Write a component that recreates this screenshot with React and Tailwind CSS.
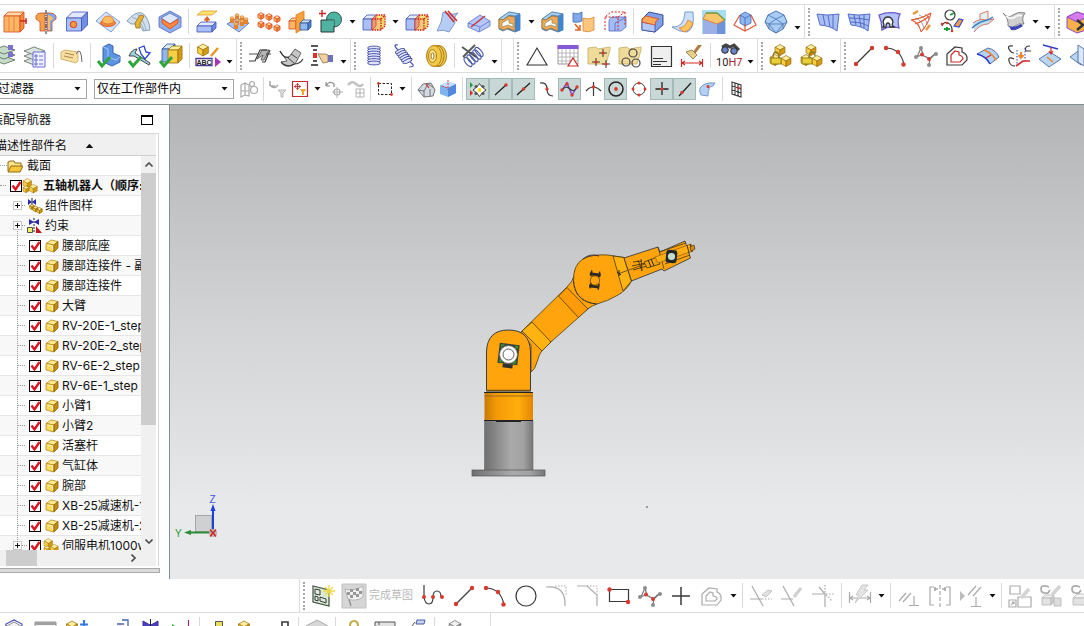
import { useState } from "react";
import clsx from "clsx";

const palettes = {
  blue: ["#dfe9ff", "#a9c0f8", "#6f8fe6", "#4150b4"],
  steel: ["#d5e8fb", "#8fb8ee", "#4a80cf", "#2b4f94"],
  gold: ["#fff0a0", "#f6cf45", "#d39a16", "#9a6c08"],
  orange: ["#ffd9a0", "#fdb664", "#f08a3c", "#d8481e"],
  gray: ["#f1f1f1", "#d3d3d3", "#a9a9a9", "#666"],
  pale: ["#f4f4f4", "#e2e2e2", "#cfcfcf", "#b5b5b5"],
};

// oblique box: front face at x,y with depth d
function Box({ x, y, w, h, d = 5, c = "blue" }) {
  const [top, front, side, line] = palettes[c];
  return (
    <g stroke={line} strokeWidth="0.8" strokeLinejoin="round">
      <path d={`M${x} ${y}l${d} ${-d}h${w}l${-d} ${d}z`} fill={top} />
      <path d={`M${x} ${y}h${w}v${h}h${-w}z`} fill={front} />
      <path d={`M${x + w} ${y}l${d} ${-d}v${h}l${-d} ${d}z`} fill={side} />
    </g>
  );
}

// isometric cube centred on x,y
function Cube({ x, y, s, c = "gold" }) {
  const [top, left, right, line] = palettes[c];
  const k = s * 0.9;
  const q = s / 2;
  return (
    <g stroke={line} strokeWidth="0.7" strokeLinejoin="round">
      <path d={`M${x} ${y - s}l${k} ${q}l${-k} ${q}l${-k} ${-q}z`} fill={top} />
      <path d={`M${x - k} ${y - q}l${k} ${q}v${s}l${-k} ${-q}z`} fill={left} />
      <path d={`M${x} ${y}l${k} ${-q}v${s}l${-k} ${q}z`} fill={right} />
    </g>
  );
}

function Dots({ points, r = 2, fill = "#d93a30" }) {
  return points.map(([x, y]) => <circle key={`${x}-${y}`} cx={x} cy={y} r={r} fill={fill} />);
}

const ink = { fill: "none", stroke: "#3a3a3a", strokeWidth: 1.2 };
const faint = { fill: "none", stroke: "#ababab", strokeWidth: 1.2 };
const red = { fill: "none", stroke: "#cf2a2a", strokeWidth: 1.2 };
const blueLine = { fill: "none", stroke: "#4a4fc0", strokeWidth: 1.2 };

const greenCheck = <path d="M1 17l4 5 8-9" fill="none" stroke="#2fa63c" strokeWidth="3" />;

const studio = (
  <>
    <path d="M3 13L7 4l2 7M15 21l1-7 6-5" {...faint} stroke="#777" />
    <path d="M2 13l6-2 8 4 6-6" fill="none" stroke="#777" strokeWidth="1.300" />
    <Dots points={[[7, 4], [2, 13], [15, 21], [22, 10]]} r={2} fill="#8d8d8d" />
    <Dots points={[[8, 10.5], [15, 15]]} r={2} />
  </>
);

const arcDots = (
  <>
    <path d="M2 4q16 0 19 17" {...ink} />
    <Dots points={[[3, 4], [15, 8], [20.5, 20.5]]} r={2.2} />
  </>
);

const lineDots = (
  <>
    <path d="M4 20L20 4" {...ink} />
    <Dots points={[[4, 20], [20, 4]]} r={2.2} />
  </>
);

const trimBox = (
  <>
    <Box x={1} y={9} w={9} h={11} d={4} />
    <path d="M10 9h9v11h-9z" fill="#f0c878" />
    <path d="M10 9l4-4h9l-4 4z" fill="#f9e47c" />
    <path d="M19 9l4-4v11l-4 4z" fill="#f4d968" />
    <path d="M10 9l4-4v11l-4 4z" fill="#e99a78" stroke="#d3443a" strokeWidth="0.800" />
    <path d="M10 9h9v11h-9M14 5h9v11l-4 4M19 9l4-4" fill="none" stroke="#d3221c" strokeWidth="1.300" strokeDasharray="1.500 1" />
  </>
);

const bracket = (
  <>
    <path d="M1 9L11 2l11 2v16l-5 2-8-3-4 2-4-2z" fill="#5fa0e2" stroke="#4a6f9e" strokeWidth="0.800" />
    <path d="M1 9L11 2l11 2-5 2-6-1-6 5z" fill="#a6d2f2" stroke="#4a6f9e" strokeWidth="0.600" />
    <path d="M1 9l4 1 6-4 6 1v14l-7-3-4 2-5-2z" fill="#f1a955" stroke="#a8732c" strokeWidth="0.800" />
    <path d="M4 13l7-4v4l4 1v3l-5-2-6 2z" fill="#fff" stroke="#8a8a6a" strokeWidth="0.700" />
    <path d="M17 6l5-2v16l-5 2z" fill="#3f86d0" />
  </>
);

const folder = <path d="M1 4l8-1 2 2 12-2v3l-4 14H1z" fill="#f0dc9a" stroke="#c4ab5e" strokeWidth="0.800" />;

const assembly = (
  <>
    <Cube x={11} y={6} s={5.5} />
    <Cube x={6} y={16} s={5.5} />
    <Cube x={17} y={17} s={5.5} />
  </>
);

const icons = {
  Extrude: (
    <>
      <Box x={1} y={6} w={16} h={16} d={4} c="orange" />
      <path d="M6 6v16M11 6v16" stroke="#ea8040" />
      <path d="M17 11h7M23 8v6" stroke="#d3221c" strokeWidth="1.400" />
    </>
  ),
  Revolve: (
    <>
      <path d="M11 3H6Q1 4 2 9l4 3v9h5z" fill="#f5a14a" stroke="#c9502a" strokeWidth="0.800" />
      <path d="M13 3h4q6 1 5 6l-4 3v9h-5z" fill="#7fa6ee" stroke="#c9502a" strokeWidth="0.800" />
      <path d="M14 5q5 1 5 4l-3 2v9h-2z" fill="#f8bd68" />
      <path d="M12 0v24" stroke="#222" strokeDasharray="4 1 1 1" />
    </>
  ),
  Hole: (
    <>
      <Box x={1.5} y={8} w={15} h={13} d={6} />
      <circle cx="8.500" cy="14.500" r="3.200" fill="#f59a3a" stroke="#d8381e" />
    </>
  ),
  Emboss: (
    <>
      <path d="M0 11L10 2l14 10-9 10z" fill="#d3e4fb" stroke="#7f9fd8" />
      <ellipse cx="12" cy="13" rx="7.500" ry="3.500" fill="#f08a3c" stroke="#d8481e" strokeWidth="0.800" />
      <path d="M6 12q1-6 6-6t6 6q-6 4-12 0z" fill="#fcbc5e" stroke="#e0702a" strokeWidth="0.800" />
    </>
  ),
  Rib: (
    <>
      <path d="M0 11Q8 1 15 3q7 4 8 17l-7 1Q13 13 4 14z" fill="#cfe0f0" stroke="#73899c" strokeWidth="0.800" />
      <path d="M5 7q9 3 12 13M10 4q7 6 9 16" stroke="#8fa5b8" fill="none" strokeWidth="0.800" />
      <path d="M8 13l5-8 4 1-4 8v4H9z" fill="#e7b431" stroke="#98701a" strokeWidth="0.800" />
    </>
  ),
  Pocket: (
    <>
      <path d="M12 1l11 6v10l-11 6L1 17V7z" fill="#8fb0f0" stroke="#5067bd" strokeWidth="0.800" />
      <path d="M12 3l9 5-9 6-9-6z" fill="#dbe7ff" stroke="#5067bd" strokeWidth="0.800" />
      <path d="M4 9l8 5 8-5v4l-8 6-8-6z" fill="#f88a3e" stroke="#d94d20" strokeWidth="0.800" />
    </>
  ),
  "Offset Face": (
    <>
      <path d="M2 5l5-4h15l-5 4z" fill="#fbe36b" stroke="#d79a36" strokeWidth="0.800" />
      <path d="M12 15V8M9.500 10.500L12 7.500l2.500 3" stroke="#e0641e" strokeWidth="1.800" fill="none" />
      <Box x={2} y={16} w={15} h={6} d={4} />
    </>
  ),
  "Pattern Feature": (
    <>
      <path d="M1 14l10-6 12 5-10 9z" fill="#a9c4f2" stroke="#4c69b6" strokeWidth="0.800" />
      {[[6, 11], [11, 8], [16, 10], [11, 13], [16, 14], [10, 17], [20, 12]].map(([x, y]) => (
        <g key={`${x}-${y}`}>
          <path d={`M${x - 2} ${y - 3}h4v5h-4z`} fill="#e4832e" />
          <ellipse cx={x} cy={y - 3} rx="2" ry="1.300" fill="#fdc277" stroke="#c86a1e" strokeWidth="0.500" />
        </g>
      ))}
    </>
  ),
  "Pattern Geometry": (
    <>
      {[[4, 6], [12, 7], [20, 9], [4, 14.5], [12, 16], [20, 18]].map(([x, y]) => (
        <Cube key={`${x}-${y}`} x={x} y={y} s={3.4} c="orange" />
      ))}
    </>
  ),
  "Mirror Feature": (
    <>
      <Box x={1} y={11} w={7} h={8} d={3} c="orange" />
      <path d="M8 5l8-4v17l-8 5z" fill="#f7a23c" stroke="#d9781c" strokeWidth="0.800" />
      <Box x={12} y={13} w={8} h={7} d={3} c="steel" />
    </>
  ),
  Unite: (
    <>
      <circle cx="15" cy="9.500" r="7.500" fill="#4fb3a2" stroke="#2d5a53" />
      <path d="M2 10h13v12H2z" fill="#4fb3a2" stroke="#333" />
      <path d="M8.500 10.500H15v5.500Q9 14 8.500 10.500z" fill="#4fb3a2" />
      <path d="M3 0v7M0 3.500h7" stroke="#d3221c" strokeWidth="1.400" />
    </>
  ),
  "Trim Body": trimBox,
  "Split Body": trimBox,
  "Trim Sheet": (
    <>
      <path d="M7 2q6 4 15 1-5 4-3 10l-6 9q-5-3-12-1 5-8 6-19z" fill="#b5ccf4" stroke="#6984c5" strokeWidth="0.800" />
      <path d="M9 1l9 11M12 1l9 10" {...red} strokeWidth="1.500" />
    </>
  ),
  "Divide Face": (
    <>
      <path d="M1 13L13 5l10 6v5l-11 6-11-5z" fill="#b3c8f8" stroke="#6073c9" strokeWidth="0.800" />
      <path d="M1 13l12 4 10-6M13 17l-1 5" stroke="#6073c9" fill="none" strokeWidth="0.800" />
      <path d="M4 17L18 6" {...red} />
    </>
  ),
  Shell: bracket,
  Thicken: bracket,
  "Scale Body": (
    <>
      <path d="M1 3q5 2 9-1v9q-4 2-9 1z" fill="#7fa9ea" stroke="#4568b0" strokeWidth="0.800" />
      <path d="M11 8q7 2 11-1v13q-5 3-11 1z" fill="#f9c77e" stroke="#e0833a" strokeWidth="0.800" />
      <path d="M3 14l4 5M8 15v5H3" stroke="#e0641e" strokeWidth="1.500" fill="none" />
    </>
  ),
  "Offset Region": (
    <>
      <path d="M6 21V12q0-5 5-5h12v10l-5 4z" fill="#a4bdf6" stroke="#5166c8" strokeWidth="0.800" />
      <path d="M12 21v-8l10-5" stroke="#5166c8" fill="none" strokeWidth="0.800" />
      <path d="M2 20V7l6-5h14v13M2 7h13v13M15 7l7-5" stroke="#d3221c" strokeDasharray="2 1.500" fill="none" />
    </>
  ),
  "Edge Blend": (
    <>
      <path d="M2 9L9 2l14 3v10l-8 7-13-2z" fill="#7f9fe8" stroke="#30408c" strokeWidth="0.900" />
      <path d="M2 12q0 6 0 8l13 2v-8q-7 0-13-2z" fill="#b4c9fa" stroke="#30408c" strokeWidth="0.700" />
      <path d="M2 12q0-5 4-6l13 3q-4 1-4 6z" fill="#f9a95a" stroke="#d8481e" strokeWidth="0.800" />
    </>
  ),
  "Face Blend": (
    <>
      <path d="M1 17q12 1 13-15h8q2 17-6 20-8 0-15-5z" fill="#cde0fa" stroke="#5c86c9" strokeWidth="0.800" />
      <path d="M8 18q7-1 9-8l5 3q-2 7-9 9z" fill="#fbc45d" stroke="#e37a32" strokeWidth="0.800" />
    </>
  ),
  Chamfer: (
    <>
      <path d="M0 0h24v24H0z" fill="#a7e0f3" />
      <path d="M1 9l8-5 14 6v14H1z" fill="#9db0e6" />
      <path d="M15 14l8-4v14h-8z" fill="#6f93d8" />
      <path d="M1 9l3-6h11l8 7-8 4z" fill="#f6c66b" stroke="#d97035" strokeWidth="0.800" />
      <path d="M4 3h11l8 7" fill="none" stroke="#7a9a45" strokeWidth="1.300" />
    </>
  ),
  Draft: (
    <>
      <path d="M7 5l5-3 6 3v8l-6 3-5-3z" fill="#8db5ee" stroke="#3f67b6" strokeWidth="0.800" />
      <path d="M7 5l5 3 6-3M12 8v8" stroke="#3f67b6" fill="none" strokeWidth="0.800" />
      <path d="M7 5L1 15l11 6 11-6-5-10M12 14v7" {...red} stroke="#dd5a3a" />
    </>
  ),
  "Face Solid": (
    <>
      <path d="M12 1l8 4 3 7-4 7-7 4-7-4-4-7 3-7z" fill="#a9cdf3" stroke="#3d69ab" strokeWidth="0.900" />
      <path d="M4 5l8 4 8-4M1 12l4 2 14 0 4-2M12 9L5 14v5M12 9l7 5v5M5 14l7 9 7-9" stroke="#3d69ab" fill="none" strokeWidth="0.700" />
    </>
  ),
  "Ruled Surface": (
    <>
      <path d="M1 4q10 2 22 0l-2 17Q15 16 4 15z" fill="#a7bff5" stroke="#4a62bf" strokeWidth="0.900" />
      <path d="M7 5l2 10M12 5l2 12M17 5v13" stroke="#4a62bf" strokeWidth="0.900" />
    </>
  ),
  "Mesh Surface": (
    <>
      <path d="M1 4q10 2 22 0l-2 17Q15 16 4 15z" fill="#a7bff5" stroke="#4a62bf" strokeWidth="0.900" />
      <path d="M7 5l2 10M12 5l2 12M17 5v13M2 8q12 0 20 2M3 12q12 0 18 4" stroke="#4a62bf" fill="none" strokeWidth="0.900" />
    </>
  ),
  "Fill Surface": (
    <>
      <path d="M1 5q10-4 21-1-3 6-1 14-10-3-17 2 0-8-3-15z" fill="#b4c3f7" stroke="#6a58d0" strokeWidth="1.300" />
      <path d="M5 17q2-2 0-5 1-5 5-5t5 5q-2 3 1 5h-4q0-4-2-4t-2 4z" fill="#fff" stroke="#333" strokeWidth="1.300" />
    </>
  ),
  "Swept Surface": (
    <>
      <path d="M2 10l8-5 12-2q-2 8-10 18Q10 12 2 10z" fill="#fff" />
      <path d="M6 8q8 3 9 11M10 5q8 3 8 10M16 4q4 2 4 6" stroke="#999" fill="none" strokeWidth="0.900" />
      <path d="M2 10q8 2 10 12M22 3q-2 10-10 19M2 10q10-1 20-7M6 14q9-3 14-8" stroke="#e4562c" fill="none" strokeWidth="1.100" />
      <path d="M4 4l5-3M17 20l4-5" stroke="#ef9340" strokeWidth="2.500" />
    </>
  ),
  "Section Surface": (
    <>
      <circle cx="10" cy="5" r="5" {...ink} />
      <path d="M10 5l4-2" stroke="#1f9c3a" strokeWidth="1.800" />
      <path d="M2 16q2-5 6-3t4 7" {...ink} />
      <path d="M14 16l5-7 4 1-4 7z" fill="#f0a04a" stroke="#3d4cc0" strokeWidth="1.200" />
      <Dots points={[[2, 14], [7, 13], [12, 21]]} r={1.3} />
      <path d="M4 19h6M7 17v4" stroke="#1f9c3a" strokeWidth="2" />
    </>
  ),
  Sweep: (
    <>
      <path d="M9 4l8-3v10l-8 3z" fill="#dff3f0" stroke="#e2655c" strokeWidth="0.900" />
      <path d="M2 13q7-5 13-3l8-1-6 5q-8 0-14 8" fill="#bfe1ee" stroke="#e2655c" strokeWidth="0.900" />
      <path d="M1 18q7-6 12-7t9-4" stroke="#3f7fc2" fill="none" strokeWidth="1.500" />
    </>
  ),
  "Sheet Options": (
    <>
      <path d="M1 3q5 6 10 2t12-2q-4 5-1 11-6-1-9 2t-7 0q1-7-5-13z" fill="#cfcfcf" stroke="#777" strokeWidth="0.900" />
      <path d="M4 6q5 4 9 1t7-1" stroke="#f5f5f5" strokeWidth="2" fill="none" />
      <path d="M7 16q5 2 12-2l2 2q-7 5-12 4z" fill="#3d44b5" />
    </>
  ),
  "Synchronous Modeling": (
    <>
      <path d="M1 7l10-5 12 4v13l-12 4L1 18z" fill="#f7b04c" stroke="#8d4ac5" />
      <path d="M1 7l10-5 12 4-12 6z" fill="#d57bea" stroke="#8d4ac5" />
      <path d="M11 10l6 5-6 5" stroke="#333" strokeWidth="2.500" fill="none" />
    </>
  ),
  "Layer Settings": (
    <>
      {[16, 11, 6].map((y) => (
        <path key={y} d={`M1 ${y}l11-4 11 4-11 4z`} fill="#c4dcc8" stroke="#5d7765" strokeWidth="0.900" />
      ))}
      <path d="M16 1h5v5h-5zM16 8h5v5h-5z" fill="#7a72cc" />
    </>
  ),
  "Layer Category": (
    <>
      {[17, 12, 7].map((y) => (
        <path key={y} d={`M1 ${y}l10-4 11 4-11 4z`} fill="#dbe4dc" stroke="#6c7a70" strokeWidth="0.900" />
      ))}
      <path d="M10 8h12v15H10z" fill="#f0f1ff" stroke="#6b6ddb" />
      <path d="M12 11h2v2h-2zM12 15h2v2h-2zM12 19h2v2h-2zM16 12h4M16 16h4M16 20h4" stroke="#6b6ddb" fill="none" />
    </>
  ),
  Attributes: (
    <>
      <path d="M1 8l4-2 13 2v9l-2 2-15-4z" fill="#f7dfa0" stroke="#c9ac68" strokeWidth="0.900" />
      <path d="M5 9l9 2M4 12l9 2" stroke="#a8864a" />
      <path d="M16 10q5-9 6 8" stroke="#666" fill="none" />
    </>
  ),
  "Check Part": (
    <>
      <path d="M6 3l6-3 4 2v7l7 3v6l-8 4-9-4z" fill="#5d94e2" stroke="#2c58a8" strokeWidth="0.900" />
      <path d="M6 3l5 2v8l8 3 4-3" stroke="#a8c8f4" fill="none" />
      {greenCheck}
    </>
  ),
  "Check Sketch": (
    <>
      <path d="M11 4l5-2 2 6 4 1-5 6-4-5z" fill="#fff" stroke="#2942cf" strokeWidth="1.300" />
      <path d="M1 12Q4 5 9 5L7 9l15 10-1 2L6 12z" fill="#9ed4df" stroke="#333" strokeWidth="0.900" />
      {greenCheck}
    </>
  ),
  "Check Assembly": (
    <>
      <Box x={3} y={5} w={8} h={13} c="steel" />
      <Box x={9} y={6} w={10} h={13} d={4} c="gold" />
      {greenCheck}
    </>
  ),
  "Edit Display": (
    <>
      <Cube x={7} y={6} s={6} />
      <path d="M15 12l7-8" stroke="#e39a2a" strokeWidth="2.500" />
      <path d="M0 14.500h16v7H0z" fill="#fff" stroke="#4d3ba0" strokeWidth="1.300" />
      <text x="8" y="20.500" textAnchor="middle" fontSize="7" fontWeight="700" fontFamily="Liberation Sans, sans-serif" fill="#222">ABC</text>
      <path d="M19 13l6 5-6 5z" fill="#a832b8" />
    </>
  ),
  "Flat Spring": (
    <>
      <path d="M9 15l5-9h7l-5 10h-3l2-5z" fill="#b5b5b5" stroke="#555" strokeWidth="0.900" />
      <path d="M1 17h6l5-11h7M14 18h3l5-12" {...ink} />
      <path d="M1 10h9M18 10h5" {...ink} strokeWidth="0.900" />
    </>
  ),
  "Curved Spring": (
    <>
      <path d="M1 7q4 8 9 6l6-8 6 4-6 11Q7 24 2 18l6-1z" fill="#c6c6c6" stroke="#555" strokeWidth="0.900" />
      <path d="M9 14l6 5M12 10l6 4" {...ink} strokeWidth="0.900" />
      <path d="M1 7q4 8 9 6M2 18q6 7 13 2 6 0 9-5" {...ink} />
    </>
  ),
  "Disc Spring": (
    <>
      <path d="M1 2h7M3 6h4M3 17h4M1 21h7" stroke="#222" strokeWidth="1.500" />
      <path d="M3 9h4v5H3z" fill="#e02e2e" />
      <path d="M8 10h7l3 1v7l-5 1z" fill="#f1cfa0" stroke="#9b7a4e" strokeWidth="0.900" />
      <path d="M18 11h5v7h-5z" fill="#6a72bc" />
    </>
  ),
  "Cylindrical Spring": (
    <>
      {[4, 6.5, 9, 11.5, 14, 16.5, 19].map((y) => (
        <ellipse key={y} cx="12" cy={y} rx="6.500" ry="1.900" fill="#dfe3ff" stroke="#3d4a9e" strokeWidth="0.900" />
      ))}
    </>
  ),
  "Tension Spring": (
    <>
      {[[7, 7], [8.5, 9], [10, 11], [11.5, 13], [13, 15], [14.5, 17]].map(([x, y]) => (
        <ellipse key={x} cx={x} cy={y} rx="5" ry="1.700" transform={`rotate(-25 ${x} ${y})`} fill="#dfe3ff" stroke="#3d4a9e" strokeWidth="0.900" />
      ))}
      <path d="M5 6Q-1 0 5 1M17 18q7 5-1 5" {...blueLine} />
    </>
  ),
  "Wave Spring": (
    <>
      {[15, 12.5, 10].map((x) => (
        <ellipse key={x} cx={x} cy="12" rx="7.500" ry="10.500" fill="#f3c94a" stroke="#a3740d" strokeWidth="0.900" />
      ))}
      <ellipse cx="8.500" cy="12" rx="4" ry="6.500" fill="#f8de85" stroke="#a3740d" strokeWidth="0.900" />
      <ellipse cx="8.500" cy="12" rx="1.500" ry="3" fill="#fff" stroke="#a3740d" />
    </>
  ),
  "Delete Spring": (
    <>
      {[[7, 18], [10, 15.5], [13, 13], [16, 10.5], [18, 8]].map(([x, y]) => (
        <ellipse key={x} cx={x} cy={y} rx="5.500" ry="2.500" transform={`rotate(50 ${x} ${y})`} fill="none" stroke="#4a5aa8" strokeWidth="1.100" />
      ))}
      <path d="M1 3l14 10M2 13L14 1" stroke="#555" strokeWidth="1.800" />
    </>
  ),
  Triangle: <path d="M12 4l10 17H2z" fill="none" stroke="#333" strokeWidth="1.100" />,
  "Tolerance Table": (
    <>
      <path d="M2 2h20v18H2z" fill="#fff" stroke="#999" />
      <path d="M1.500 1h21v4h-21z" fill="#8559d8" />
      <path d="M2 9h20M2 13h20M2 17h20M6 5v15M10 5v15M14 5v15M18 5v15" stroke="#aaa" fill="none" strokeWidth="0.800" />
      <path d="M17 14l5 8H12z" fill="#fff" stroke="#cf2a2a" strokeWidth="1.200" />
    </>
  ),
  "Point Group": (
    <>
      {folder}
      <path d="M9 14v8M5 18h8M16 5v8M12 9h8M19 16v8M15 20h8" stroke="#333" />
      <Dots points={[[9, 18], [16, 9], [19, 20]]} r={1.6} />
    </>
  ),
  "Circle Group": (
    <>
      {folder}
      <g fill="none" stroke="#444" strokeWidth="1.200">
        <circle cx="8" cy="18" r="4" />
        <circle cx="15" cy="9" r="4" />
        <circle cx="18" cy="19" r="4" />
      </g>
    </>
  ),
  Note: (
    <>
      <path d="M2.500 2.500h20v20h-20z" fill="#eee" stroke="#333" strokeWidth="1.200" />
      <path d="M4 14.500h10M4 17.500h14M4 20.500h8" stroke="#333" />
    </>
  ),
  "Clean Dimension": (
    <>
      <path d="M18 1l4 0-7 9-2-2z" fill="#b5793c" />
      <path d="M6 8l6-2 5 5-4 4z" fill="#e6d08a" stroke="#8d7c48" strokeWidth="0.900" />
      <path d="M1.500 15v8M22.500 15v8M2 19h20M5 17l-3 2 3 2M19 17l3 2-3 2" {...red} />
    </>
  ),
  "Find Fit": (
    <>
      <path d="M5 3l4-2 4 2 4-2 5 5" stroke="#444" strokeWidth="3" fill="none" />
      <circle cx="8" cy="6" r="3.300" fill="#6a83c4" stroke="#222" />
      <circle cx="17" cy="7" r="3.300" fill="#6a83c4" stroke="#222" />
      <text x="-1" y="22" fontSize="11" fontFamily="Roboto, sans-serif" fill="#222">
        10<tspan fill="#a3262d">H7</tspan>
      </text>
    </>
  ),
  "Lock Component": (
    <>
      {assembly}
      <path d="M2 14h10v6H2z" fill="#e8cf3a" stroke="#8a7512" strokeWidth="0.900" />
      <path d="M4 14q0-6 3-6t3 6" fill="none" stroke="#8a7512" strokeWidth="1.300" />
    </>
  ),
  "Unlock Component": (
    <>
      {assembly}
      <path d="M2 14h10v6H2z" fill="#e8cf3a" stroke="#8a7512" strokeWidth="0.900" />
      <path d="M9 14q0-6 3-6t3 4" fill="none" stroke="#8a7512" strokeWidth="1.300" />
    </>
  ),
  Line: lineDots,
  Arc: arcDots,
  Spline: studio,
  "Offset Curve": (
    <>
      <path d="M2 21V10l8-7 7 1v4q6 2 5 8l-5 5z" {...ink} />
      <path d="M6 18v-7l4-4 4 1v3q4 1 4 4l-3 3z" {...red} />
    </>
  ),
  "Isoparametric Curve": (
    <>
      <path d="M1 10l11-6q8 2 11 9l-9 7Q9 12 1 10z" fill="#b6d3f5" stroke="#445e9e" strokeWidth="0.900" />
      <path d="M1 10q9 2 13 10" stroke="#2b3fd0" strokeWidth="1.600" fill="none" />
      <path d="M8 6q8 3 12 10" stroke="#ef8430" strokeWidth="1.600" fill="none" />
      <path d="M10 14l5-3" {...red} />
    </>
  ),
  "Project Curve": (
    <>
      <path d="M6 2Q0 1 2 5t5 4M23 2q-6 0-4 5h5M7 15q-6-3-5 2t6 5" {...ink} />
      <path d="M10 6v14M18 4v13" stroke="#3b3bd0" strokeDasharray="1.500 1.500" />
      <path d="M14 8v5M11.500 11l2.500 3 2.500-3" stroke="#ec8b2e" strokeWidth="2" fill="none" />
      <path d="M9 22l7-5h7" {...red} strokeWidth="1.600" />
    </>
  ),
  "Offset in Face": (
    <>
      <path d="M1 15l11-7 11 7-12 8z" fill="#b9d5ef" stroke="#4a6ca6" strokeWidth="0.900" />
      <path d="M5 1l15 4" stroke="#2b3fd0" strokeWidth="1.400" />
      <path d="M13 3v7M11 7l2 3 2-3" {...red} />
      <path d="M9 13l6 5" stroke="#ef8430" strokeWidth="1.600" />
    </>
  ),
  "Intersection Curve": (
    <>
      <path d="M1 13l11-8 11 8-11 8z" fill="#b9d5ef" stroke="#4a6ca6" strokeWidth="0.900" />
      <path d="M9 1l6 4v17l-6-4z" fill="#dbe8f7" stroke="#4a6ca6" strokeWidth="0.900" />
    </>
  ),
  // selection bar
  "Select Similar": (
    <>
      <path d="M4 8l4-2v12l-4 2zM8 6l4 2v11l-4-1M4 14h8" {...faint} />
      <circle cx="15" cy="7" r="2.500" {...faint} />
      <circle cx="17" cy="13" r="3.500" {...faint} />
    </>
  ),
  "Reset Filter": (
    <>
      <path d="M4 8q4 5 8 0M4 9V4M4 9h5" {...faint} strokeWidth="1.600" />
      <path d="M12 13h8l-3 3v4h-2v-4z" fill="#ddd" stroke="#b9b9b9" />
    </>
  ),
  "Snap Filter": (
    <>
      <path d="M4.500 4.500h15v15h-15z" fill="#fff" stroke="#c62a30" strokeWidth="1.200" />
      <circle cx="9.500" cy="9.500" r="2.200" fill="none" stroke="#b04040" strokeWidth="0.800" />
      <path d="M9.500 6v7M6 9.500h7" stroke="#b02020" strokeWidth="0.800" />
      <path d="M12 12h6l-2 3v3h-2v-3z" fill="#f2a62c" />
    </>
  ),
  "Restore Point": (
    <>
      <path d="M4 9q3-6 8-2v3M4 9V5M4 9h4" {...faint} stroke="#8a8a8a" />
      <circle cx="15" cy="15" r="3" {...faint} />
      <path d="M15 10v11M10 15h11" {...faint} strokeWidth="0.900" />
    </>
  ),
  "Find Face": (
    <>
      <path d="M4 8q4-5 8-1t7 0" stroke="#c2c2c2" strokeWidth="2.500" fill="none" />
      <path d="M12 12h8v8h-8zM12 16h8M16 12v8" {...faint} strokeWidth="0.900" />
    </>
  ),
  "Rectangle Select": (
    <>
      <path d="M5.500 6.500h13v11h-13z" fill="none" stroke="#222" strokeDasharray="2.500 1.500" />
      <Dots points={[[5.5, 6.5], [18.5, 17.500]]} r={1.4} />
    </>
  ),
  "Highlight Edges": (
    <>
      <path d="M4 13l5-6 8-1 4 7-2 6-9 1z" fill="#d3dae4" stroke="#666" strokeWidth="0.900" />
      <path d="M4 13l6 1 4-7 6 4M10 14v6M16 12v7" stroke="#666" fill="none" strokeWidth="0.900" />
      <path d="M12 7l3 4" {...red} />
    </>
  ),
  "Translucent Body": (
    <>
      <path d="M4 8l8-3 8 2v9l-8 4-8-3z" fill="#7fb3f2" />
      <path d="M4 8l8-3 8 2-8 4z" fill="#c6e0ff" />
      <path d="M12 11l8-4v9l-8 4z" fill="#4f8ade" />
      <path d="M12 3v10M6 9l6 2" {...red} strokeWidth="0.900" strokeDasharray="2 1" />
    </>
  ),
  "Snap Point": (
    <>
      <path d="M4 5l3 3-3 3z" fill="#1f9c3a" />
      <path d="M4 13l3 3-3 3z" fill="#d22f27" />
      <path d="M13.500 6.500l2.500 3.500 4 3-4 3-2.500 3.500L11 16l-4-3 4-3z" fill="#fff" stroke="#333" strokeWidth="0.900" />
      <Dots points={[[10, 9.5], [17, 9.5], [10, 16.5], [17, 16.5]]} r={1.5} fill="#555" />
      <circle cx="13.500" cy="13" r="2" fill="#f4d71e" />
    </>
  ),
  "End Point": (
    <>
      <path d="M6 18L17 8" stroke="#222" strokeWidth="1.300" />
      <Dots points={[[17, 8]]} r={1.8} />
    </>
  ),
  "Mid Point": (
    <>
      <path d="M5 18L18 6" stroke="#222" strokeWidth="1.300" />
      <Dots points={[[11.5, 12]]} r={1.8} />
    </>
  ),
  "Control Point": (
    <>
      <path d="M5 6q7-1 7 6t6 7" {...ink} />
      <Dots points={[[12, 12]]} r={1.7} />
    </>
  ),
  Pole: (
    <>
      <path d="M4 13l5-7 5 12 5-8" stroke="#8b3fc8" strokeWidth="1.400" fill="none" />
      <path d="M4 13q4-5 8-1t7-2" {...ink} />
      <Dots points={[[4, 13], [9, 7], [14, 18], [19, 10]]} r={1.7} />
    </>
  ),
  "Intersection Point": (
    <>
      <path d="M5 14q7-8 15 0M12.500 5v14" {...ink} />
      <Dots points={[[12.5, 10]]} r={1.7} />
    </>
  ),
  "Arc Center": (
    <>
      <circle cx="12" cy="12" r="7" {...ink} stroke="#222" strokeWidth="1.500" />
      <Dots points={[[12, 12]]} r={1.9} />
    </>
  ),
  "Quadrant Point": (
    <>
      <circle cx="12" cy="12" r="6" {...ink} strokeWidth="1" />
      <Dots points={[[12, 6], [12, 18], [6, 12], [18, 12]]} r={1.5} />
    </>
  ),
  "Existing Point": (
    <>
      <path d="M12 5v13M5.500 12h13" stroke="#222" strokeWidth="1.300" />
      <Dots points={[[12, 12]]} r={1.6} />
    </>
  ),
  "Point on Curve": (
    <>
      <path d="M6 19L18 6" stroke="#222" strokeWidth="1.300" />
      <Dots points={[[9, 15.500]]} r={1.7} />
    </>
  ),
  "Point on Face": (
    <>
      <path d="M4 11q4-6 15-5l-2 3q-5 0-5 10l-7-1q-2-4-1-7z" fill="#b5d0f5" stroke="#6a90c8" strokeWidth="0.900" />
      <Dots points={[[12, 9.500]]} r={1.5} />
    </>
  ),
  "Bounded Grid": (
    <>
      <path d="M7 5l9 3v12l-9-3zM10 6v12M13 7v12M7 9l9 3M7 13l9 3" {...ink} strokeWidth="1.100" />
      <Dots points={[[13.5, 11]]} r={1.5} />
    </>
  ),
  // sketch bar
  "Sketch in Task": (
    <>
      <path d="M2 2l16 4v16L2 18z" fill="#dcebd8" stroke="#3f4f3f" strokeWidth="1.200" />
      <path d="M4 5l5 1v5l-5-1zM4 12l3 1v4l-3-1zM9 13l6 2v4l-6-2z" {...ink} strokeWidth="1" />
      <path d="M18 1v12M12 7h12M14 3l8 8M22 3l-8 8" stroke="#ecd94a" strokeWidth="1.300" />
    </>
  ),
  "Finish Sketch": (
    <>
      <path d="M0 0h24v24H0z" fill="#d6d6d6" stroke="#c2c2c2" />
      <path d="M4 6l5 16" stroke="#8d8d8d" strokeWidth="1.300" />
      <path d="M3 5q8 3 18-3v11q-7 5-15 2z" fill="#f0f0f0" stroke="#aaa" strokeWidth="0.800" />
      <path d="M8 5h3v3H8zM14 4h3v3h-3zM11 8h3v3h-3zM17 7h3v3h-3zM5 8h3v3H5zM8 11h3v3H8zM14 10h3v3h-3z" fill="#979797" />
    </>
  ),
  Profile: (
    <>
      <path d="M3 1v12q1 7 5 7t4-7q0-6 4-6t4 6" {...ink} />
      <Dots points={[[3, 13], [12, 13], [21, 13]]} r={2} />
    </>
  ),
  Circle: <circle cx="12" cy="12" r="10" {...ink} />,
  Fillet: (
    <>
      <path d="M1 3q20-2 19 19" {...faint} />
      <path d="M10 2h11v10" {...faint} strokeWidth="1" strokeDasharray="1.500 1.500" />
    </>
  ),
  "Chamfer Corner": (
    <>
      <path d="M1 2h10l10 9v11" {...faint} />
      <path d="M11 2h10v9" {...faint} strokeWidth="1" strokeDasharray="1.500 1.500" />
    </>
  ),
  Rectangle: (
    <>
      <path d="M2.500 5.500h19v12h-19z" {...ink} />
      <Dots points={[[2.5, 5.500], [21, 18]]} r={2.2} />
    </>
  ),
  Point: <path d="M12 3v18M3 12h18" {...ink} strokeWidth="1.500" />,
  Offset: (
    <>
      <path d="M2 21V10l7-6 8 1v3q5 2 4 8l-4 5z" {...faint} />
      <path d="M6 17v-5l4-4 3 1v3q5 1 4 3l-2 2z" {...faint} />
    </>
  ),
  "Quick Trim": (
    <>
      <path d="M3 2l11 20M1 15h12" {...faint} />
      <path d="M13 15h10" {...faint} strokeDasharray="1.500 1.500" />
      <path d="M13 11l6-5 4 1-6 6z" fill="#e2e2e2" stroke="#c2c2c2" />
    </>
  ),
  "Quick Extend": (
    <>
      <path d="M3 2l11 20M1 15h12" {...faint} />
      <path d="M14 13l7-9" stroke="#cfcfcf" strokeWidth="3" />
    </>
  ),
  "Make Corner": (
    <>
      <path d="M1 10h13v13M8 3l6 7" {...faint} />
      <path d="M14 1v8M15 10h8M15 11l6 6" {...faint} strokeDasharray="1.500 1.500" />
    </>
  ),
  "Rapid Dimension": (
    <>
      <path d="M1.500 8v11M22.500 8v11M2 14h20M5 12l-3 2 3 2M19 12l3 2-3 2" {...faint} />
      <path d="M14 1h6l-4 5h4L7 19l4-8H8z" fill="#e4e4e4" stroke="#c4c4c4" strokeWidth="0.900" />
    </>
  ),
  "Geometric Constraints": <path d="M2 17l7-8M6 18l8-9M17 12v10M12 21.500h10" {...faint} />,
  "Make Symmetric": (
    <>
      <path d="M6 3H2v18h4M18 3h4v18h-4" {...faint} />
      <path d="M12 1v22" {...faint} strokeDasharray="4 2" />
      <path d="M6 5h4M18 5h-4M7 3v4M17 3v4" {...faint} strokeWidth="1.600" />
    </>
  ),
  "Display Constraints": (
    <>
      <path d="M1 7l5 5-5 5z" fill="#bbb" />
      <path d="M9 11l8-9M14 12l8-9M17 13v10M12 22.500h10" {...faint} />
    </>
  ),
  "Convert Reference": (
    <>
      <path d="M2 2h10v8H2zM10 13h13v10H10zM1 16h7v7H1z" {...faint} />
      <path d="M3 21l3-3M4 18h2v2" {...faint} />
      <path d="M13 14l8-9" stroke="#d4d4d4" strokeWidth="3.500" />
    </>
  ),
  "Alternate Solution": (
    <>
      <path d="M10 3Q2 0 2 5t7 4l2-3" {...faint} strokeWidth="1.800" />
      <Box x={3} y={14} w={9} h={7} d={3} c="pale" />
      <path d="M13 11l8-9" stroke="#d4d4d4" strokeWidth="3.500" />
      <path d="M15 14h7v8h-7z" fill="#ddd" stroke="#bbb" strokeWidth="0.900" />
    </>
  ),
  "Inferred Constraints": (
    <>
      <path d="M10 3Q2 0 2 5t7 4l2-3" {...faint} strokeWidth="1.800" />
      <Box x={3} y={14} w={14} h={7} d={4} c="pale" />
    </>
  ),
  // assembly bar
  "Find Component": (
    <>
      <Cube x={12} y={11} s={8} c="gray" />
      <path d="M4 10V5l8-4 8 4v6" {...blueLine} />
    </>
  ),
  "Open Component": (
    <>
      <path d="M2 3h21v14H2z" fill="#f3f3f3" stroke="#999" />
      <path d="M2 3h21v3H2z" fill="#a0a0a0" />
      <ellipse cx="12" cy="11" rx="6" ry="4" fill="#ddd" />
    </>
  ),
  "Add Component": (
    <>
      <Cube x={8} y={8} s={6} />
      <path d="M20 1v9M16 5.500h8" stroke="#3a7be0" strokeWidth="2.200" />
    </>
  ),
  "Move Component": (
    <>
      <path d="M10 5h7M15 1h6v6" fill="none" stroke="#4a62b0" strokeWidth="1.300" />
      <Cube x={13} y={12} s={5} />
    </>
  ),
  "Assembly Constraints": (
    <>
      <path d="M5 2l7 4-7 5zM20 2l-7 4 7 5z" fill="#4a3fc0" stroke="#3a30a0" />
      <path d="M12.500 0v12" stroke="#222" />
    </>
  ),
  "Mirror Assembly": (
    <>
      <path d="M3 5l6 4-6 4z" fill="#2fa63c" />
      <path d="M19.500 1v12" stroke="#8c2d7c" strokeWidth="1.200" />
    </>
  ),
  "Suppress Component": (
    <>
      <path d="M9.500 2.500h7v6h-7z" fill="#e8df60" stroke="#555" />
      <path d="M14 7h7v5h-7z" fill="#8d8da6" />
    </>
  ),
  "Explode View": <Cube x={7} y={8} s={6} />,
  Sequence: <path d="M14 3h6v14h-6z" {...ink} strokeWidth="1.600" />,
  "Reference Set": (
    <>
      <path d="M1 7l11-6 11 6-11 5z" fill="#d7d7d7" stroke="#aaa" />
      <path d="M1 7l11 5 11-5v7H1z" fill="#b4b4b4" />
    </>
  ),
  "Lock Part": <path d="M8 14V7q0-5 4-5t4 5v7" fill="none" stroke="#c4b04a" strokeWidth="2.200" />,
  "Measure Part": (
    <>
      <path d="M2 3h20v5H2z" fill="#e2e2e2" stroke="#555" />
      <path d="M6 3v3M10 8h12v4H10z" fill="#ccc" stroke="#555" />
    </>
  ),
  "Wave Linker": (
    <>
      <path d="M13 1h8l-1 4h-8z" fill="#c8d4f0" stroke="#4a5aa8" />
      <path d="M11 3L4 12M12 8h8v4h-9z" fill="#ddd" stroke="#555" />
    </>
  ),
  Arrangement: <Cube x={14} y={8} s={6.5} c="gray" />,
};

function Icon({ name }) {
  return (
    <svg viewBox="0 0 24 24" className="size-6 shrink-0 overflow-visible" aria-hidden="true">
      {icons[name]}
    </svg>
  );
}

function Tri({ className }) {
  return (
    <svg viewBox="0 0 7 4" className={clsx("h-1 w-[7px]", className)} aria-hidden="true">
      <path d="M0.500 0h6L3.500 3.500z" fill="#111" />
    </svg>
  );
}

const DROP = "v";
const MORE = "V";
const SEP = "|";
const GRIP = "::";
const GAP = " ";

function Tool({ item, compact }) {
  if (item === SEP) {
    return (
      <span className={clsx("flex shrink-0 justify-center", compact ? "w-[7px]" : "w-1.5 py-1")}>
        <span className="w-px bg-[#d9d9d9]" />
      </span>
    );
  }
  if (item === GRIP) {
    return (
      <span className="flex w-2 shrink-0 items-center justify-center self-stretch border-l border-[#dcdcdc]">
        <span className="h-7 border-l-2 border-dotted border-[#a8a8a8]" />
      </span>
    );
  }
  if (item === GAP) return <span className="w-3 shrink-0 border-l border-[#dcdcdc]" />;
  if (item === DROP || item === MORE) {
    return (
      <button
        aria-label={item === DROP ? "More choices" : "Toolbar options"}
        className={clsx("flex shrink-0 justify-center", item === DROP ? "w-3 items-center" : "w-[13px] items-end pb-2")}
      >
        <Tri />
      </button>
    );
  }
  return (
    <button
      aria-label={item}
      className={clsx("flex shrink-0 items-center justify-center overflow-hidden", compact ? "w-[22px]" : "w-[31px]")}
    >
      <Icon name={item} />
    </button>
  );
}

function Tools({ items }) {
  return items.map((item, i) => <Tool key={i} item={item} />);
}

const featureBar = [
  "Extrude", "Revolve", "Hole", "Emboss", "Rib", "Pocket", SEP,
  "Offset Face", "Pattern Feature", "Pattern Geometry", "Mirror Feature", "Unite", DROP,
  "Trim Body", DROP, "Split Body", "Trim Sheet", "Divide Face", "Shell", DROP,
  "Thicken", "Scale Body", "Offset Region", SEP,
  "Edge Blend", "Face Blend", "Chamfer", "Draft", "Face Solid", MORE, GRIP,
  "Ruled Surface", "Mesh Surface", "Fill Surface", "Swept Surface", "Section Surface", "Sweep", "Sheet Options", DROP, MORE, GRIP,
  "Synchronous Modeling",
];

const utilityBar = [
  "Layer Settings", "Layer Category", SEP, "Attributes", SEP,
  "Check Part", "Check Sketch", "Check Assembly", SEP, "Edit Display", MORE, GRIP,
  "Flat Spring", "Curved Spring", "Disc Spring", MORE, GRIP,
  "Cylindrical Spring", "Tension Spring", "Wave Spring", SEP, "Delete Spring", MORE, GAP, GRIP,
  "Triangle", "Tolerance Table", "Point Group", "Circle Group", "Note", "Clean Dimension", SEP, "Find Fit", MORE, GRIP,
  "Lock Component", "Unlock Component", MORE, GRIP,
  "Line", "Arc", "Spline", "Offset Curve", "Isoparametric Curve", "Project Curve", "Offset in Face", "Intersection Curve",
];

const selectionBar = [
  "Select Similar", SEP, "Reset Filter", "Snap Filter", DROP, "Restore Point", "Find Face", SEP,
  "Rectangle Select", DROP, SEP, "Highlight Edges", "Translucent Body", SEP,
];

const snapPoints = [
  ["Snap Point", true], ["End Point", true], ["Mid Point", true], ["Control Point", false],
  ["Pole", true], ["Intersection Point", false], ["Arc Center", true], ["Quadrant Point", false],
  ["Existing Point", true], ["Point on Curve", true], ["Point on Face", false],
];

const sketchBar = [
  "Profile", "Line", "Arc", "Circle", "Fillet", "Chamfer Corner", "Rectangle", "Spline", "Point", "Offset", DROP, SEP,
  "Quick Trim", "Quick Extend", "Make Corner", SEP, "Rapid Dimension", DROP, SEP,
  "Geometric Constraints", "Make Symmetric", "Display Constraints", DROP, SEP,
  "Convert Reference", "Alternate Solution", "Inferred Constraints",
];

const assemblyBar = [
  "Find Component", "Open Component", "Add Component", DROP, "Move Component", "Assembly Constraints", "Mirror Assembly", SEP,
  "Suppress Component", "Explode View", "Sequence", SEP, "Reference Set", SEP,
  "Lock Part", "Measure Part", "Wave Linker", SEP, "Arrangement",
];

function FilterSelect({ label, value, className }) {
  return (
    <div className={clsx("relative w-[140px] shrink-0", className)}>
      <select
        aria-label={label}
        className="block h-5 w-full appearance-none border border-[#a5a5a5] bg-white px-0.5 text-xs leading-4 text-black outline-none"
      >
        <option>{value}</option>
      </select>
      <Tri className="pointer-events-none absolute top-2 right-1.5" />
    </div>
  );
}

function SnapBar() {
  const [active, setActive] = useState(Object.fromEntries(snapPoints));

  return (
    <div className="flex h-[31px] items-center overflow-hidden">
      <FilterSelect label="Type filter" value="没有选择过滤器" className="-ml-[53px]" />
      <FilterSelect label="Selection scope" value="仅在工作部件内" className="mr-1 ml-[7px]" />
      <div className="flex h-6">
        {selectionBar.map((item, i) => (
          <Tool key={i} item={item} compact />
        ))}
      </div>
      <div className="flex h-[22px]">
        {snapPoints.map(([name]) => (
          <button
            key={name}
            aria-label={name}
            aria-pressed={active[name]}
            onClick={() => setActive({ ...active, [name]: !active[name] })}
            className={clsx(
              "flex w-[23px] items-center justify-center overflow-hidden",
              active[name] && "border border-[#a3bab8] bg-[#c8d8d6]"
            )}
          >
            <Icon name={name} />
          </button>
        ))}
      </div>
      <div className="flex h-6">
        <Tool item={SEP} compact />
        <Tool item="Bounded Grid" compact />
      </div>
    </div>
  );
}

const parts = [
  "腰部底座", "腰部连接件 - 副本", "腰部连接件", "大臂", "RV-20E-1_step", "RV-20E-2_step", "RV-6E-2_step",
  "RV-6E-1_step", "小臂1", "小臂2", "活塞杆", "气缸体", "腕部", "XB-25减速机-1", "XB-25减速机-2",
];

function Check({ label }) {
  return (
    <span className="relative size-3 shrink-0">
      <input
        type="checkbox"
        defaultChecked
        aria-label={label}
        className="peer block size-3 appearance-none border border-black bg-white"
      />
      <svg viewBox="0 0 12 12" className="pointer-events-none absolute inset-0 hidden peer-checked:block" aria-hidden="true">
        <path d="M2.500 5.500l3 4L10.500 2" fill="none" stroke="#e0141e" strokeWidth="2.400" />
      </svg>
    </span>
  );
}

function Expander({ label }) {
  return (
    <button aria-label={`Expand ${label}`} className="flex size-[9px] shrink-0 items-center justify-center border border-[#c9c9c9] bg-white">
      <svg viewBox="0 0 5 5" className="size-[5px]" aria-hidden="true">
        <path d="M0 2.500h5M2.500 0v5" stroke="#111" />
      </svg>
    </button>
  );
}

function PartIcon() {
  return (
    <svg viewBox="0 0 14 14" className="size-3.5 shrink-0" aria-hidden="true">
      <path d="M1 4.500L6 1l7 1.500-4 3.500z" fill="#ffe98c" stroke="#b58a1c" strokeWidth="0.800" />
      <path d="M1 4.500L9 6v7L1 11z" fill="#fbd95a" stroke="#b58a1c" strokeWidth="0.800" />
      <path d="M9 6l4-3.500V9l-4 4z" fill="#c48a14" stroke="#8d6208" strokeWidth="0.800" />
      <path d="M2.500 6l5 1v4" stroke="#fff6c8" fill="none" />
    </svg>
  );
}

function AssemblyIcon() {
  return (
    <svg viewBox="0 0 24 24" className="size-4 shrink-0" aria-hidden="true">
      <Cube x={8} y={8} s={7} />
      <Cube x={6} y={17} s={5} />
      <Cube x={17} y={16} s={6.5} />
    </svg>
  );
}

function TreeRow({ children, className }) {
  return (
    <li
      className={clsx(
        "flex h-5 items-center border-b border-[#e6e6e6] whitespace-nowrap odd:bg-white even:bg-[#f8f8f8] *:shrink-0",
        className
      )}
    >
      {children}
    </li>
  );
}

const stub = "border-t border-dotted border-[#9a9a9a]";
const trunk = "border-l border-dotted border-[#9a9a9a]";

function Navigator() {
  return (
    <aside className="flex w-[169px] shrink-0 flex-col pb-1.5 text-xs text-[#111]">
      <div className="flex h-7 items-center justify-between overflow-hidden pt-0.5 pr-4">
        <h2 className="-ml-[9px] leading-4">装配导航器</h2>
        <button aria-label="Maximize" className="h-2.5 w-3 border border-t-2 border-black" />
      </div>
      <div className="mr-2.5 flex min-h-0 flex-1 flex-col border-t border-r border-[#d6d6d6]">
        <button className="mr-0.5 flex h-[22px] shrink-0 items-center gap-[18px] overflow-hidden border-b border-[#cfcfcf] bg-[#f0f0f0] pt-0.5">
          <span className="-ml-[5px] leading-4">描述性部件名</span>
          <Tri className="h-[5px] w-[9px] rotate-180" />
        </button>
        <div className="flex min-h-0 flex-1">
          <ul className="relative min-w-0 flex-1 overflow-hidden font-[Inter,'Noto_Sans_CJK_SC',sans-serif]">
            <TreeRow>
              <span className={clsx("w-[7px]", stub)} />
              <svg viewBox="0 0 16 14" className="mr-1 h-3.5 w-4" aria-hidden="true">
                <path d="M1 12V3l2-1h4l1 2h6v3" fill="#ffe48a" stroke="#8d6a10" />
                <path d="M1 13l3-6h12l-3 6z" fill="#f7c63b" stroke="#8d6a10" />
              </svg>
              截面
            </TreeRow>
            <TreeRow className="font-bold">
              <span className={clsx("mr-1 w-1.5", stub)} />
              <Check label="五轴机器人" />
              <AssemblyIcon />
              <span className="ml-[5px]">五轴机器人（顺序: 时间顺序）</span>
            </TreeRow>
            <TreeRow>
              <span className="w-[13px]" />
              <Expander label="组件图样" />
              <span className={clsx("mr-0.5 w-[3px]", stub)} />
              <svg viewBox="0 0 16 16" className="mr-0.5 size-4" aria-hidden="true">
                <path d="M1 1l4 3-4 3zM9 1L5 4l4 3z" fill="#2a2bb0" />
                <path d="M5 0v8" stroke="#222" />
                <Cube x={5} y={9} s={2.6} />
                <Cube x={8.5} y={11} s={2.8} />
                <Cube x={12.5} y={12.5} s={3} />
              </svg>
              组件图样
            </TreeRow>
            <TreeRow>
              <span className="w-[13px]" />
              <Expander label="约束" />
              <span className={clsx("mr-0.5 w-[3px]", stub)} />
              <svg viewBox="0 0 16 16" className="mr-0.5 size-4" aria-hidden="true">
                <path d="M2 1l5 3-5 3zM12 1L7 4l5 3z" fill="#2a2bb0" />
                <path d="M7 0v15" stroke="#222" strokeDasharray="2 1" />
                <path d="M.5 9.500h5v5h-5z" fill="#f5f06a" stroke="#555" />
                <path d="M9 8v7h6z" fill="#c5161d" />
              </svg>
              约束
            </TreeRow>
            {parts.map((name) => (
              <TreeRow key={name}>
                <span className="w-[17px]" />
                <span className={clsx("mr-1 w-2", stub)} />
                <Check label={name} />
                <span className="w-1" />
                <PartIcon />
                <span className="ml-[3px]">{name}</span>
              </TreeRow>
            ))}
            <TreeRow>
              <span className="w-[13px]" />
              <Expander label="伺服电机" />
              <span className={clsx("mr-0.5 w-[5px]", stub)} />
              <Check label="伺服电机" />
              <span className="w-0.5" />
              <AssemblyIcon />
              <span className="ml-[3px]">伺服电机1000w</span>
            </TreeRow>
            <li aria-hidden="true" className={clsx("absolute top-[75px] bottom-2 left-[17px]", trunk)} />
          </ul>
          <div className="mr-0.5 flex w-[15px] shrink-0 flex-col justify-between bg-[#f0f0f0]">
            <button aria-label="Scroll up" className="flex h-[17px] items-center justify-center">
              <svg viewBox="0 0 8 5" className="h-[5px] w-2" aria-hidden="true">
                <path d="M0.500 4.500L4 1l3.500 3.500" fill="none" stroke="#505050" strokeWidth="1.600" />
              </svg>
            </button>
            <div className="mb-auto h-[64%] bg-[#cdcdcd]" />
            <button aria-label="Scroll down" className="flex h-[17px] items-center justify-center">
              <svg viewBox="0 0 8 5" className="h-[5px] w-2" aria-hidden="true">
                <path d="M0.500 0.500L4 4L7.500 0.500" fill="none" stroke="#505050" strokeWidth="1.600" />
              </svg>
            </button>
          </div>
        </div>
        <div className="mr-0.5 flex h-4 shrink-0 items-center justify-between bg-[#f0f0f0] pr-5 pl-1.5">
          <div className="h-full w-[31px] bg-[#cdcdcd]" />
          <button aria-label="Scroll right">
            <svg viewBox="0 0 5 8" className="h-2 w-[5px]" aria-hidden="true">
              <path d="M0.500 0.500L4 4L0.500 7.500" fill="none" stroke="#505050" strokeWidth="1.600" />
            </svg>
          </button>
        </div>
      </div>
      <div className="mt-0.5 mr-[9px] h-[5px] border border-l-0 border-[#a9a9a9] bg-[#dadada]" />
    </aside>
  );
}

function Robot() {
  const edge = { stroke: "#4a3a10", strokeWidth: 0.8, strokeLinejoin: "round" };
  return (
    <g>
      {/* base */}
      <rect x="484.500" y="420" width="48.500" height="50" fill="url(#column)" />
      <rect x="472" y="470" width="73" height="6" fill="url(#column)" stroke="#555" strokeWidth="0.700" />
      <path d="M484.500 421v49M533 421v49" stroke="#6a6a6a" strokeWidth="0.600" />
      <rect x="484.500" y="392" width="48.500" height="29" fill="url(#collar)" />
      <path d="M484 392.500h49M484 420.500h49" stroke="#222" strokeWidth="1.200" />
      <path d="M484.500 396h48.500" stroke="#9a6c10" strokeWidth="1" />
      <path d="M496 421.500h25" stroke="#222" />

      {/* upper arm */}
      <path d="M521 332L567 287Q573 281 574 276L586 272L597 304Q588 307 579 317L543 349Q539 354 537 362Q535 370 531 372V345Z" fill="#ffa40d" {...edge} />
      <path d="M532 322L551 342L542 351L522 331Z" fill="#ffb310" {...edge} />
      <path d="M558.500 296L567 287.500L588 309L578.500 317.500Z" fill="#ff9a08" {...edge} />

      {/* shoulder */}
      <path d="M486.500 391V352Q487 330 508.500 330T530.500 352V391Z" fill="#ffa40d" stroke="#26303c" strokeWidth="0.900" />
      <path d="M486 390.500h45" stroke="#77500a" strokeWidth="1.500" />
      <g transform="rotate(7 508.500 354.500)">
        <rect x="498.500" y="344" width="20" height="20" fill="#3a4038" />
        <rect x="504" y="364" width="10" height="4" fill="#2d3130" />
        <path d="M500 345h4l-4 4zM517 345v4l-4-4zM500 363v-4l4 4zM517 363h-4l4-4z" fill="#35913a" />
      </g>
      <circle cx="508.500" cy="354.500" r="8.800" fill="#fff" stroke="#888" strokeWidth="0.600" />
      <circle cx="508.500" cy="354.500" r="5.500" fill="#fff" stroke="#444" strokeWidth="0.900" />

      {/* elbow */}
      <path d="M573.500 281Q573 265 583 259Q592 254 608 255L624 257.500L631.500 281Q627 290 618 295Q608 301 597 304Q575 302 573.500 281Z" fill="#ffa40d" {...edge} />
      <path d="M613 256L624 257.500L631.500 281L623 291Z" fill="#ffb310" {...edge} />
      <path d="M583 259q7-6 16-3" fill="none" stroke="#333" />
      <path d="M573.500 281Q575 302 597 304" fill="none" stroke="#333" strokeDasharray="3 1" />
      <g transform="rotate(8 595 280)">
        <path d="M589 273h11v3h-11zM590 285h10v3h-10z" fill="#2d2a20" />
        <path d="M590.500 271v6M598.500 271v6M591.500 283v6M599.500 283v6" stroke="#2d2a20" strokeWidth="1.500" />
        <circle cx="595" cy="280.500" r="4.700" fill="#ffa40d" stroke="#4a3a10" strokeWidth="0.700" />
      </g>

      {/* wrist */}
      <path d="M624 258L658 247L660 252L685 241L690.500 258L664 271L662 269L631.500 281Z" fill="#ffa40d" {...edge} stroke="#26303c" />
      <path d="M658 247l6 22M686 243l-27 9M665 264l25-9" fill="none" {...edge} />
      <path d="M619 273.500L640 266L648 262.500" stroke="#7a5508" fill="none" />
      <path d="M633 262l9-1M632 266l14-3M633 270l14-4M638 260l4 11M641 259l1 12" stroke="#33290d" strokeWidth="0.800" fill="none" />
      <path d="M644 262l13-5 3 7-13 4z" fill="#f0a010" {...edge} />
      <path d="M648 260l3 7M651 259l3 7" stroke="#33290d" />
      <path d="M655 257l36-13 2 7-35 12z" fill="#ffae14" stroke="#8a6008" strokeWidth="0.700" />
      <path d="M687 245l2 8M690 244l2 8" stroke="#33290d" strokeWidth="0.900" />
      <path d="M690 247l4-2 1 4-4 2z" fill="#d98c0c" stroke="#33290d" strokeWidth="0.600" />
      <path d="M619 270v6M617 272l4 3" stroke="#222" />
      <rect x="666" y="250" width="11" height="13" rx="3" fill="#22282a" transform="rotate(6 671 256)" />
      <circle cx="671.500" cy="256.500" r="3.600" fill="#c5ddd2" />
    </g>
  );
}

function Viewport() {
  return (
    <main className="min-w-0 flex-1 border-l border-[#848f94] bg-linear-to-b from-[#b3b4b6] via-[#d2d3d5] via-45% to-[#e7e9eb] to-85%">
      <svg viewBox="170 105 914 474" preserveAspectRatio="xMinYMin meet" className="h-full w-full" role="img" aria-label="五轴机器人">
        <defs>
          <linearGradient id="column">
            <stop offset="0" stopColor="#6f6f6f" />
            <stop offset="0.550" stopColor="#aaa" />
            <stop offset="0.800" stopColor="#a2a2a2" />
            <stop offset="1" stopColor="#777" />
          </linearGradient>
          <linearGradient id="collar">
            <stop offset="0" stopColor="#c47a00" />
            <stop offset="0.250" stopColor="#f59a06" />
            <stop offset="0.700" stopColor="#ffae0c" />
            <stop offset="1" stopColor="#e58500" />
          </linearGradient>
        </defs>
        <Robot />
        <circle cx="647" cy="507" r="0.900" fill="#777" />
        {/* coordinate triad */}
        <rect x="195.500" y="515.500" width="16" height="16" fill="#cfd0d2" stroke="#a5a6a8" />
        <path d="M213 532V508" stroke="#1f3fe0" strokeWidth="2" />
        <path d="M213 504l-2.500 7h5z" fill="#1f3fe0" />
        <path d="M210 532.500H190" stroke="#2d8a35" strokeWidth="2" />
        <path d="M184 532.500l7-2.500v5z" fill="#2d8a35" />
        <circle cx="213" cy="533" r="4" fill="#c9a9a9" />
        <path d="M210 529.500l6 7M216 529.500l-6 7" stroke="#c22a2a" strokeWidth="1.300" />
        <g fontFamily="Liberation Sans, sans-serif" fontSize="10">
          <text x="209.500" y="503" fill="#3a55e8">Z</text>
          <text x="175" y="537" fill="#2d9a35">Y</text>
        </g>
      </svg>
    </main>
  );
}

export default function App() {
  return (
    <div className="flex h-screen flex-col overflow-hidden bg-white font-['Noto_Sans','Noto_Sans_CJK_SC',sans-serif] select-none">
      <header className="shrink-0">
        <div className="h-[5px] border-b border-[#dcdcdc]" />
        <div className="flex h-[34px] overflow-hidden border-b border-[#dcdcdc]">
          <div className="-ml-px flex">
            <Tools items={featureBar} />
          </div>
        </div>
        <div className="flex h-[34px] overflow-hidden border-b border-[#dcdcdc]">
          <div className="-ml-3 flex">
            <Tools items={utilityBar} />
          </div>
        </div>
        <SnapBar />
      </header>

      <div className="flex min-h-0 flex-1 border-t border-[#848f94]">
        <Navigator />
        <Viewport />
      </div>

      <footer className="shrink-0">
        <div className="flex h-[34px] overflow-hidden border-b border-[#dcdcdc] pl-[299px]">
          <Tool item={GRIP} />
          <Tool item="Sketch in Task" />
          <button disabled className="flex shrink-0 items-center pr-1 text-[11px] text-[#b9b9b9]">
            <span className="flex w-[31px] justify-center">
              <Icon name="Finish Sketch" />
            </span>
            完成草图
          </button>
          <Tools items={sketchBar} />
        </div>
        <div className="h-[13px] overflow-hidden">
          <div className="-ml-0.5 flex h-9 w-fit border-r border-[#dcdcdc] pr-[22px]">
            <Tools items={assemblyBar} />
          </div>
        </div>
      </footer>
    </div>
  );
}
